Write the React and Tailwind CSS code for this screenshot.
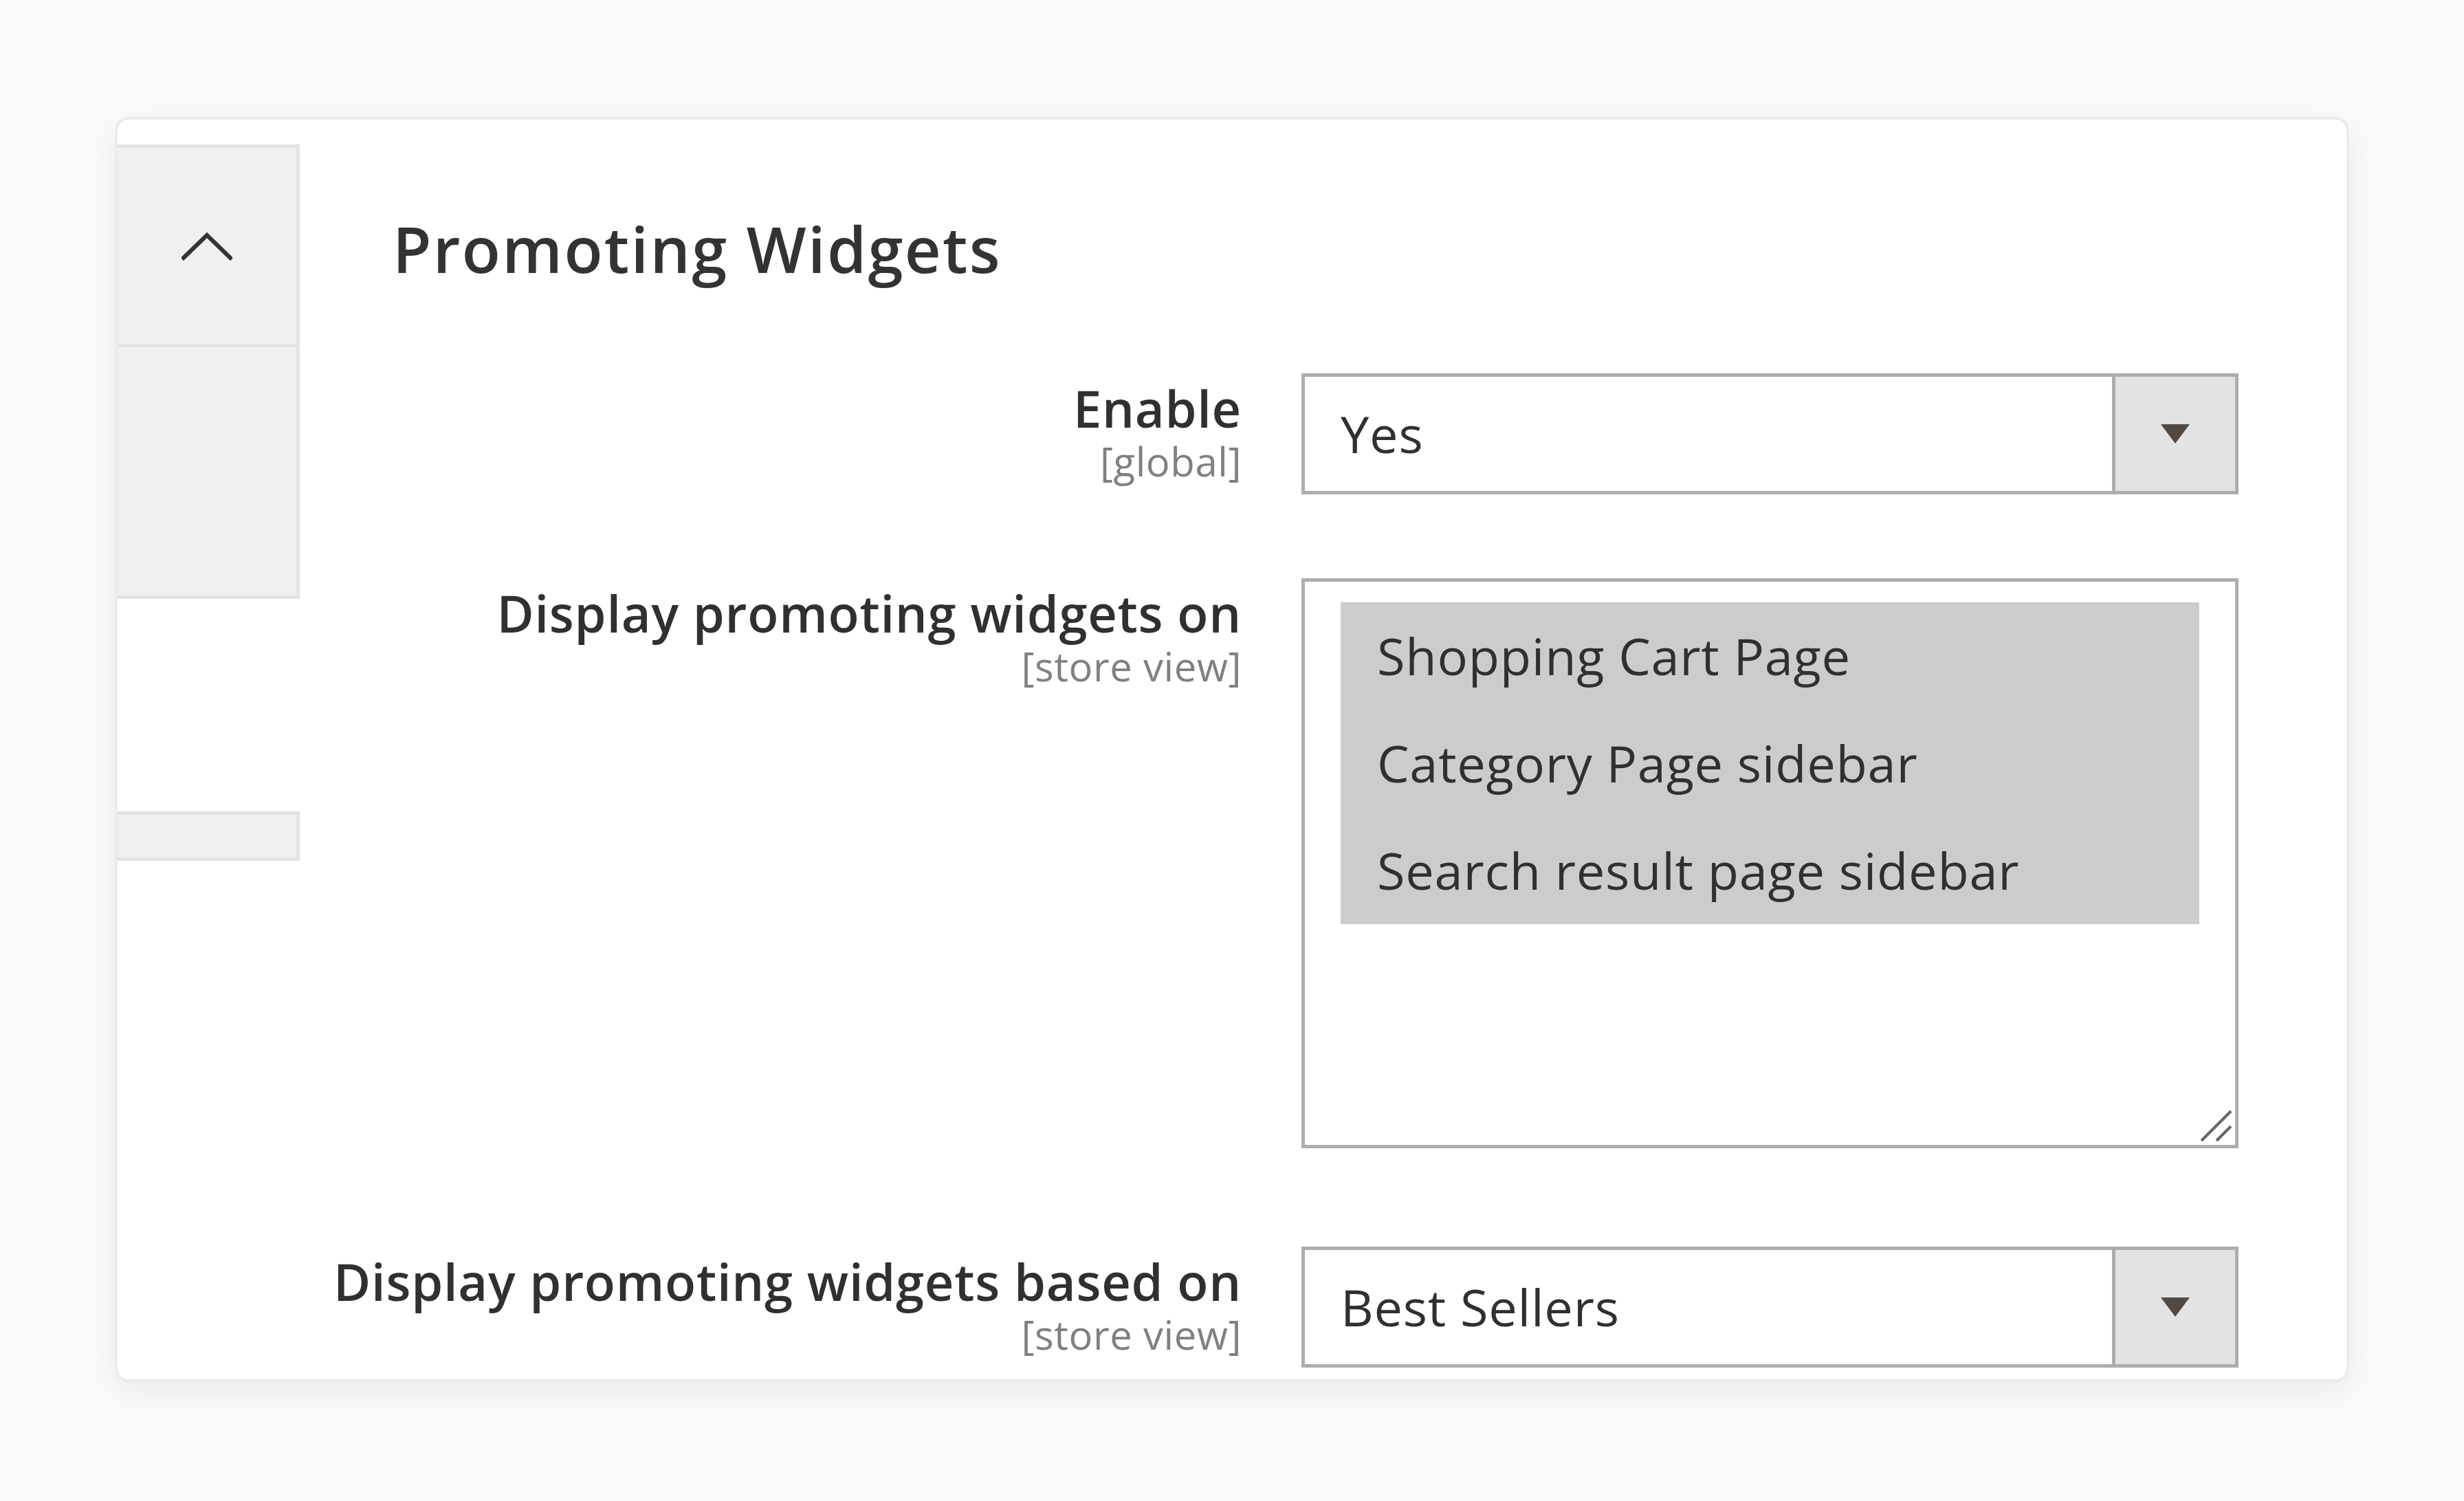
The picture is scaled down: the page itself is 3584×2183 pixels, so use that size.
import React from 'react'

function Chevron() {
    return (
        <svg width="74" height="42" viewBox="0 0 74 42" fill="none">
            <polyline points="3,38 37,5 71,38" stroke="#333333" strokeWidth="6" strokeLinecap="square" />
        </svg>
    )
}

function Arrow() {
    return (
        <svg width="42" height="28" viewBox="0 0 42 28">
            <polygon points="0,0 42,0 21,28" fill="#514943" />
        </svg>
    )
}

function Label({title, scope}) {
    return (
        <div className="w-[1370px] shrink-0 pt-[7px] text-right">
            <div className="text-[74px] leading-[1.2] tracking-[0.01em] font-semibold text-[#303030] whitespace-nowrap">{title}</div>
            <div className="text-[58px] leading-[1.1] tracking-[0.01em] text-[#808080] whitespace-nowrap">{scope}</div>
        </div>
    )
}

function Select({value}) {
    return (
        <div className="w-[1363px] h-[176px] border-[5px] border-[#adadad] bg-white flex">
            <div className="flex-1 flex items-center pl-[52px] text-[74px] leading-[1.2] tracking-[0.01em] text-[#303030]">{value}</div>
            <div className="w-[179px] border-l-[5px] border-[#adadad] bg-[#e3e3e3] flex items-center justify-center">
                <Arrow />
            </div>
        </div>
    )
}

const options = ['Shopping Cart Page', 'Category Page sidebar', 'Search result page sidebar']

export default function App() {
    return (
        <div className="min-h-screen bg-[#fafafa] pt-[170px] pl-[167px] font-['Open_Sans',sans-serif]">
            <div className="w-[3250px] h-[1840px] bg-white border-4 border-[#ebebeb] rounded-[20px] overflow-hidden shadow-[0_14px_50px_rgba(0,0,0,0.07)] flex">
                {/* left tab */}
                <div className="w-[265px] shrink-0 pt-[36px] flex flex-col">
                    <div className="bg-[#f0f0f0] border-y-[5px] border-r-[5px] border-[#e3e3e3]">
                        <div className="h-[290px] border-b-[5px] border-[#e3e3e3] flex items-center justify-center">
                            <Chevron />
                        </div>
                        <div className="h-[361px]"></div>
                    </div>
                    <div className="mt-[309px] h-[72px] bg-[#f0f0f0] border-y-[5px] border-r-[5px] border-[#e3e3e3]"></div>
                </div>

                {/* content */}
                <div className="flex-1 pt-[133px]">
                    <h2 className="ml-[135px] text-[92px] leading-[1.2] tracking-[0.025em] font-semibold text-[#333333]">Promoting Widgets</h2>

                    <div className="mt-[126px] flex gap-[87px] items-start">
                        <Label title="Enable" scope="[global]" />
                        <Select value="Yes" />
                    </div>

                    <div className="mt-[122px] flex gap-[87px] items-start">
                        <Label title="Display promoting widgets on" scope="[store view]" />
                        <div className="relative w-[1363px] h-[829px] border-[5px] border-[#adadad] bg-white pt-[30px] px-[52px]">
                            <div className="bg-[#cccccc]">
                                {options.map(o => (
                                    <div key={o} className="h-[156px] leading-[156px] pl-[53px] text-[74px] tracking-[0.01em] text-[#303030] whitespace-nowrap">{o}</div>
                                ))}
                            </div>
                            <svg className="absolute right-[3px] bottom-[3px]" width="48" height="48" viewBox="0 0 48 48">
                                <line x1="2" y1="45" x2="45" y2="2" stroke="#666666" strokeWidth="4" />
                                <line x1="24" y1="45" x2="45" y2="24" stroke="#666666" strokeWidth="4" />
                            </svg>
                        </div>
                    </div>

                    <div className="mt-[143px] flex gap-[87px] items-start">
                        <Label title="Display promoting widgets based on" scope="[store view]" />
                        <Select value="Best Sellers" />
                    </div>
                </div>
            </div>
        </div>
    )
}
